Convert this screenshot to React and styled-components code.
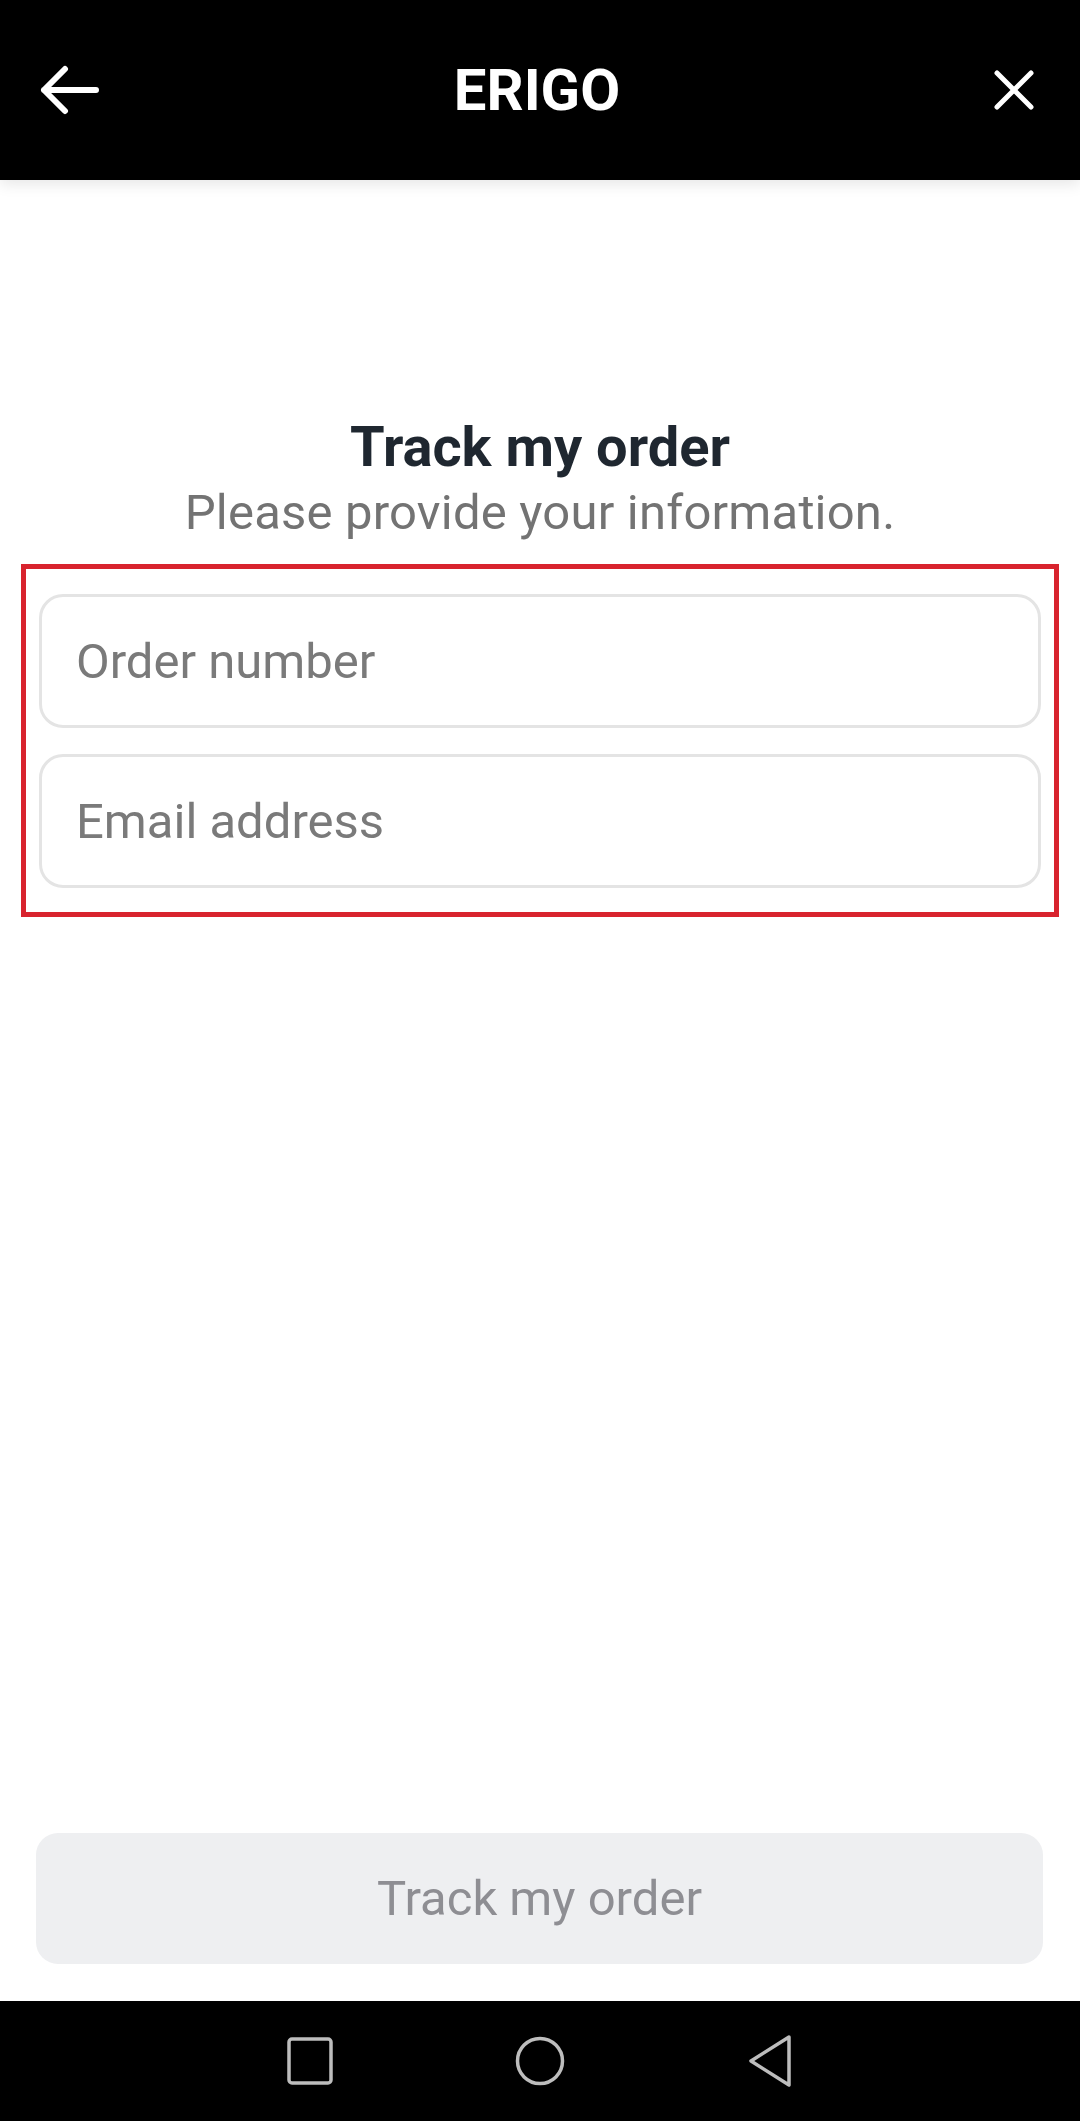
import React, { useState } from 'react';
import styled, { createGlobalStyle } from 'styled-components';

const GlobalStyle = createGlobalStyle`
  html, body {
    margin: 0;
    padding: 0;
    background: #fff;
  }
  * {
    box-sizing: border-box;
  }
`;

const TrackOrder = () => {
  const [form, setForm] = useState({ order: '', email: '' });

  const handleChange = (e) => {
    const { name, value } = e.target;
    setForm({ ...form, [name]: value });
  };

  const filled = form.order && form.email;

  return (
    <Screen>
      <GlobalStyle />
      <Header>
        <IconButton aria-label="Back">
          <svg width="60" height="50" viewBox="0 0 60 50" fill="none">
            <path d="M25 4 L4 25 L25 46 M4 25 H56" stroke="#fff" strokeWidth="6" strokeLinecap="round" strokeLinejoin="round" />
          </svg>
        </IconButton>
        <Brand>ERIGO</Brand>
        <IconButton aria-label="Close" $right>
          <svg width="40" height="40" viewBox="0 0 40 40" fill="none">
            <path d="M3 3 L37 37 M37 3 L3 37" stroke="#fff" strokeWidth="5" strokeLinecap="round" />
          </svg>
        </IconButton>
      </Header>

      <Content>
        <Title>Track my order</Title>
        <Subtitle>Please provide your information.</Subtitle>
        <FieldGroup>
          <Field
            name="order"
            value={form.order}
            onChange={handleChange}
            placeholder="Order number"
          />
          <Field
            name="email"
            type="email"
            value={form.email}
            onChange={handleChange}
            placeholder="Email address"
          />
        </FieldGroup>
      </Content>

      <Footer>
        <SubmitButton disabled={!filled}>Track my order</SubmitButton>
      </Footer>

      <NavBar>
        <svg width="48" height="50" viewBox="0 0 48 50" fill="none">
          <rect x="3" y="3" width="42" height="44" rx="3" stroke="#bdbdbd" strokeWidth="3.5" />
        </svg>
        <svg width="52" height="52" viewBox="0 0 52 52" fill="none">
          <circle cx="26" cy="26" r="22.5" stroke="#bdbdbd" strokeWidth="3.5" />
        </svg>
        <svg width="48" height="54" viewBox="0 0 48 54" fill="none">
          <path d="M43 3 L5 27 L43 51 Z" stroke="#bdbdbd" strokeWidth="3.5" strokeLinejoin="round" />
        </svg>
      </NavBar>
    </Screen>
  );
};

export default TrackOrder;

const Screen = styled.div`
  display: flex;
  flex-direction: column;
  min-height: 100vh;
  font-family: Roboto, "Liberation Sans", sans-serif;
  background: #fff;
`;

const Header = styled.header`
  display: grid;
  grid-template-columns: 1fr auto 1fr;
  align-items: center;
  height: 180px;
  padding: 0 46px 0 40px;
  background: #000;
  box-shadow: 0 4px 14px rgba(0, 0, 0, 0.1);
  position: relative;
  z-index: 1;
`;

const IconButton = styled.button`
  display: flex;
  justify-self: ${({ $right }) => ($right ? 'end' : 'start')};
  padding: 0;
  border: none;
  background: none;
  cursor: pointer;
`;

const Brand = styled.h1`
  margin: 0;
  color: #fff;
  font-size: 58px;
  font-weight: 700;
  line-height: 1;
`;

const Content = styled.main`
  display: flex;
  flex-direction: column;
  align-items: center;
  flex: 1;
  padding: 235px 21px 0;
`;

const Title = styled.h2`
  margin: 0;
  color: #1f2730;
  font-size: 56px;
  font-weight: 700;
  line-height: 64px;
`;

const Subtitle = styled.p`
  margin: 6px 0 0;
  color: #737373;
  font-size: 49px;
  line-height: 56px;
  letter-spacing: 0.2px;
`;

const FieldGroup = styled.div`
  display: flex;
  flex-direction: column;
  gap: 26px;
  width: 100%;
  margin-top: 23px;
  padding: 25px 13px 24px 13px;
  border: 5px solid #d8232e;
`;

const Field = styled.input`
  width: 100%;
  height: 134px;
  padding: 0 34px;
  border: 3px solid #e4e4e4;
  border-radius: 24px;
  background: #fff;
  color: #222;
  font-family: inherit;
  font-size: 49px;
  outline: none;

  &::placeholder {
    color: #7a7a7a;
  }
`;

const Footer = styled.div`
  padding: 0 37px 37px 36px;
`;

const SubmitButton = styled.button`
  width: 100%;
  height: 131px;
  border: none;
  border-radius: 22px;
  background: ${({ disabled }) => (disabled ? '#eeeff1' : '#000')};
  color: ${({ disabled }) => (disabled ? '#8e8e93' : '#fff')};
  font-family: inherit;
  font-size: 49px;
  cursor: pointer;
`;

const NavBar = styled.nav`
  display: flex;
  align-items: center;
  justify-content: center;
  gap: 180px;
  height: 120px;
  background: #000;
`;
